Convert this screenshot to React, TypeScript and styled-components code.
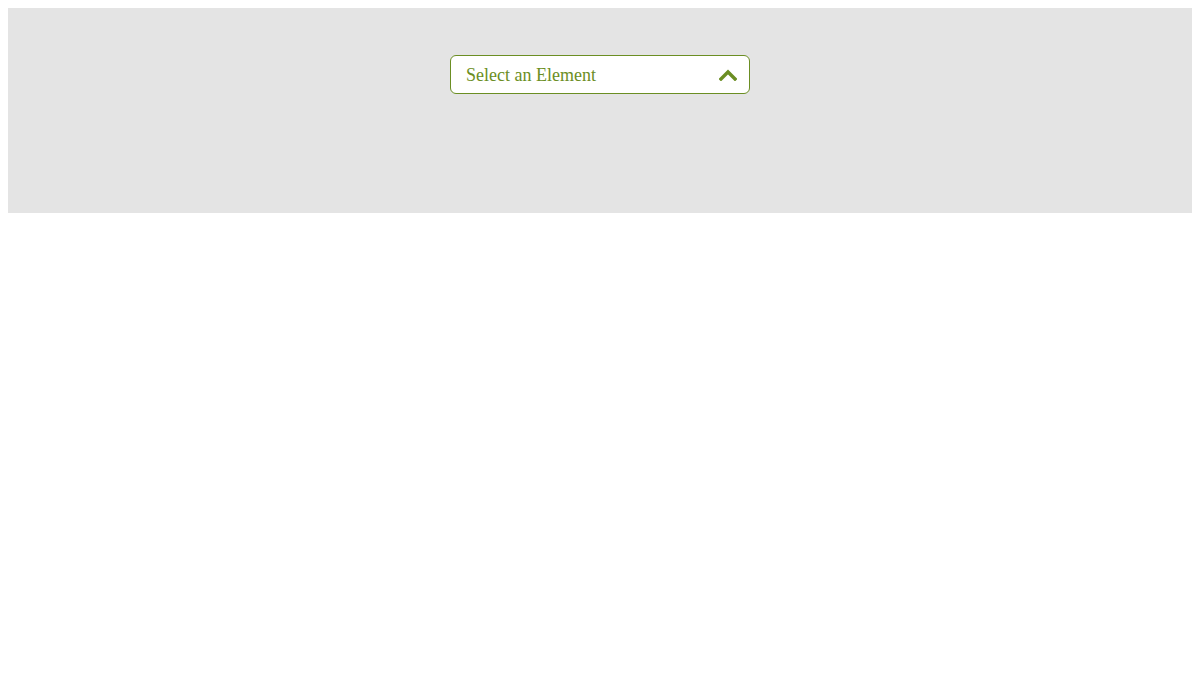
import React from "react";
import styled, { createGlobalStyle } from "styled-components";

const GlobalStyle = createGlobalStyle`
  body {
    margin: 8px;
    background: #ffffff;
    font-family: "Liberation Serif", "Times New Roman", serif;
  }
`;

const Panel = styled.div`
  box-sizing: border-box;
  height: 205px;
  background: #e4e4e4;
  padding-top: 47px;
  display: flex;
  justify-content: center;
  align-items: flex-start;
`;

const SelectBox = styled.button`
  box-sizing: border-box;
  width: 300px;
  height: 39px;
  background: #ffffff;
  border: 1px solid #6b8e23;
  border-radius: 6px;
  padding: 0 12px 0 15px;
  display: flex;
  align-items: center;
  justify-content: space-between;
  cursor: pointer;
  font-family: "Liberation Serif", "Times New Roman", serif;
  font-size: 18px;
  color: #6b8e23;
`;

const Label = styled.span`
  line-height: 1;
`;

const Chevron = () => (
  <svg width="18" height="12" viewBox="0 0 18 12" aria-hidden="true">
    <path
      d="M2 10 L9 3 L16 10"
      fill="none"
      stroke="#6b8e23"
      strokeWidth="3.4"
      strokeLinecap="square"
      strokeLinejoin="miter"
    />
  </svg>
);

const App = () => {
  const [open, setOpen] = React.useState(true);
  return (
    <>
      <GlobalStyle />
      <Panel>
        <SelectBox onClick={() => setOpen(!open)}>
          <Label>Select an Element</Label>
          <Chevron />
        </SelectBox>
      </Panel>
    </>
  );
};

export default App;
